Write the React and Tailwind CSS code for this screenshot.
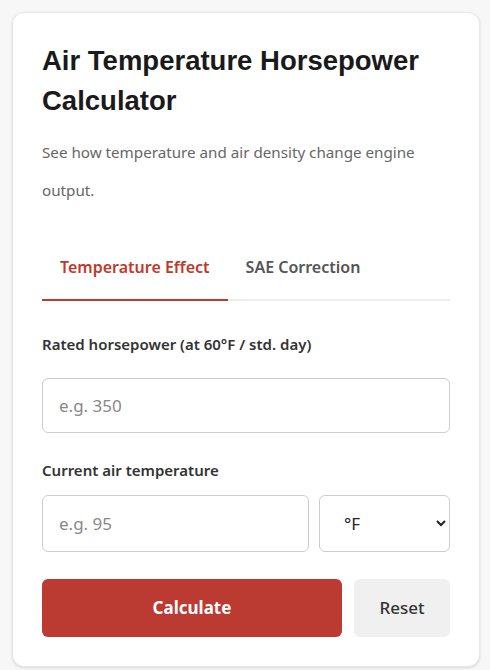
import { useState } from "react";

const body = { fontFamily: '"Noto Sans", "Open Sans", sans-serif' };

function App() {
  const [tab, setTab] = useState("temp");
  const [hp, setHp] = useState("");
  const [temp, setTemp] = useState("");
  const [unit, setUnit] = useState("F");

  return (
    <div className="min-h-screen bg-[#f7f7f7] pt-3 pl-3" style={body}>
      <div className="w-[468px] bg-white rounded-xl border border-[#e8e8e8] shadow-sm px-[29px] pt-[28px] pb-[29px]">
        <h1
          className="text-[27.5px] leading-[40px] font-bold text-[#1a1a1a]"
          style={{ fontFamily: '"Liberation Sans", Arial, sans-serif' }}>
          Air Temperature Horsepower Calculator
        </h1>
        <p className="mt-[12px] text-[15.2px] leading-[38px] text-[#666]">
          See how temperature and air density change engine output.
        </p>

        {/* Tabs */}
        <div className="mt-[34px] flex border-b-2 border-[#eeeeee]">
          <button
            onClick={() => setTab("temp")}
            className={`px-[18px] pt-[12px] pb-[20px] text-[16px] font-semibold -mb-[2px] border-b-2 ${
              tab === "temp" ? "text-[#c0392b] border-[#c0392b]" : "text-[#555] border-transparent"
            }`}>
            Temperature Effect
          </button>
          <button
            onClick={() => setTab("sae")}
            className={`px-[18px] pt-[12px] pb-[20px] text-[16px] font-semibold -mb-[2px] border-b-2 ${
              tab === "sae" ? "text-[#c0392b] border-[#c0392b]" : "text-[#555] border-transparent"
            }`}>
            SAE Correction
          </button>
        </div>

        {/* Form */}
        <label className="block mt-[32px] text-[15px] font-semibold text-[#333]">
          Rated horsepower (at 60°F / std. day)
        </label>
        <input
          value={hp}
          onChange={(e) => setHp(e.target.value)}
          placeholder="e.g. 350"
          className="mt-[22px] w-full h-[55px] rounded-md border border-[#cccccc] px-4 text-[17px] text-[#333] placeholder-[#888] outline-none"
        />

        <label className="block mt-[26px] text-[15px] font-semibold text-[#333]">Current air temperature</label>
        <div className="mt-[14px] flex gap-[10px]">
          <input
            value={temp}
            onChange={(e) => setTemp(e.target.value)}
            placeholder="e.g. 95"
            className="flex-1 min-w-0 h-[57px] rounded-md border border-[#cccccc] px-4 text-[17px] text-[#333] placeholder-[#888] outline-none"
          />
          <select
            value={unit}
            onChange={(e) => setUnit(e.target.value)}
            className="w-[131px] h-[57px] rounded-md border border-[#cccccc] pl-[20px] pr-2 text-[17px] text-[#222] bg-white outline-none">
            <option value="F">°F</option>
            <option value="C">°C</option>
          </select>
        </div>

        <div className="mt-[27px] flex gap-3">
          <button className="flex-1 h-[58px] rounded-md bg-[#bb3a31] text-white text-[17px] font-bold">Calculate</button>
          <button className="w-[96px] h-[58px] rounded-md bg-[#f0f0f0] text-[#333] text-[17px] font-medium">Reset</button>
        </div>
      </div>
    </div>
  );
}

export default App;
